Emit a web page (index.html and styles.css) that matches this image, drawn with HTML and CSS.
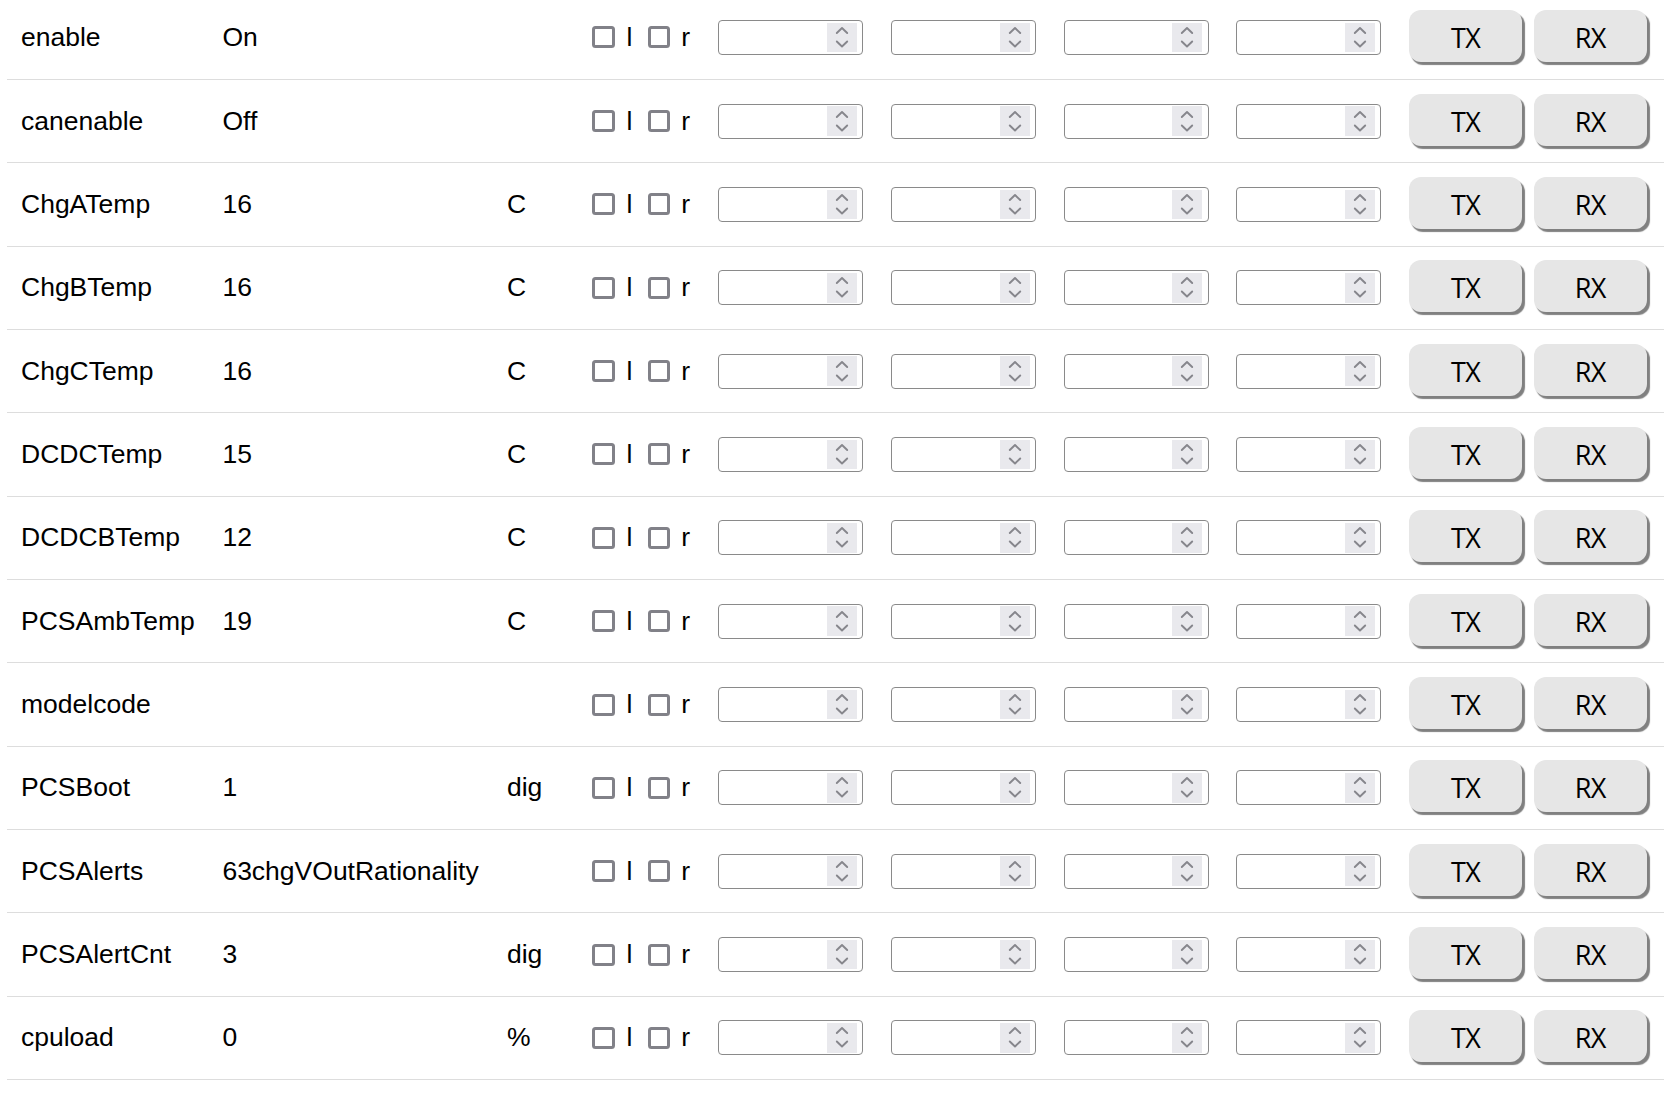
FILE: index.html
```html
<!DOCTYPE html>
<html lang="en">
<head>
<meta charset="utf-8">
<title>Signals</title>
<link rel="stylesheet" href="styles.css">
</head>
<body>
<table class="sig">
  <colgroup>
    <col class="c-name"><col class="c-val"><col class="c-unit"><col class="c-chk">
    <col class="c-num"><col class="c-num"><col class="c-num"><col class="c-num">
    <col class="c-btn">
  </colgroup>
  <tbody id="rows"></tbody>
</table>
<template id="rowtpl">
  <tr>
    <td class="name"></td>
    <td class="val"></td>
    <td class="unit"></td>
    <td class="chk"><div class="chkwrap"><input type="checkbox" class="cb"><span class="lbl">l</span><input type="checkbox" class="cb"><span class="lbl r">r</span></div></td>
    <td><div class="num"><input type="text" class="numin"><span class="spin"><svg width="14" height="23" viewBox="0 0 14 23"><path d="M1.8 7 L7 2 L12.2 7 M1.8 15.5 L7 20.5 L12.2 15.5" fill="none" stroke="#86868c" stroke-width="1.9" stroke-linecap="round" stroke-linejoin="round"/></svg></span></div></td>
    <td><div class="num"><input type="text" class="numin"><span class="spin"><svg width="14" height="23" viewBox="0 0 14 23"><path d="M1.8 7 L7 2 L12.2 7 M1.8 15.5 L7 20.5 L12.2 15.5" fill="none" stroke="#86868c" stroke-width="1.9" stroke-linecap="round" stroke-linejoin="round"/></svg></span></div></td>
    <td><div class="num"><input type="text" class="numin"><span class="spin"><svg width="14" height="23" viewBox="0 0 14 23"><path d="M1.8 7 L7 2 L12.2 7 M1.8 15.5 L7 20.5 L12.2 15.5" fill="none" stroke="#86868c" stroke-width="1.9" stroke-linecap="round" stroke-linejoin="round"/></svg></span></div></td>
    <td><div class="num"><input type="text" class="numin"><span class="spin"><svg width="14" height="23" viewBox="0 0 14 23"><path d="M1.8 7 L7 2 L12.2 7 M1.8 15.5 L7 20.5 L12.2 15.5" fill="none" stroke="#86868c" stroke-width="1.9" stroke-linecap="round" stroke-linejoin="round"/></svg></span></div></td>
    <td class="btns"><div class="btnwrap"><button class="btn">TX</button><button class="btn">RX</button></div></td>
  </tr>
</template>
<script src="app.js"></script>
</body>
</html>
```

FILE: app.js
```js
var data = [
  ["enable", "On", ""],
  ["canenable", "Off", ""],
  ["ChgATemp", "16", "C"],
  ["ChgBTemp", "16", "C"],
  ["ChgCTemp", "16", "C"],
  ["DCDCTemp", "15", "C"],
  ["DCDCBTemp", "12", "C"],
  ["PCSAmbTemp", "19", "C"],
  ["modelcode", "", ""],
  ["PCSBoot", "1", "dig"],
  ["PCSAlerts", "63chgVOutRationality", ""],
  ["PCSAlertCnt", "3", "dig"],
  ["cpuload", "0", "%"]
];
var tpl = document.getElementById("rowtpl");
var body = document.getElementById("rows");
data.forEach(function (d) {
  var tr = tpl.content.firstElementChild.cloneNode(true);
  tr.querySelector(".name").textContent = d[0];
  tr.querySelector(".val").textContent = d[1];
  tr.querySelector(".unit").textContent = d[2];
  body.appendChild(tr);
});
```

FILE: styles.css
```css
html, body {
  margin: 0;
  padding: 0;
  background: #ffffff;
}
body {
  font-family: "Liberation Sans", Arial, sans-serif;
  font-size: 26.5px;
  color: #000000;
}
.sig {
  border-collapse: collapse;
  table-layout: fixed;
  width: 1656.8px;
  margin: -4px 0 0 7px;
}
.c-name { width: 201.4px; }
.c-val { width: 284.6px; }
.c-unit { width: 85.3px; }
.c-chk { width: 126px; }
.c-num { width: 172.7px; }
.c-btn { width: 268.7px; }
.sig tr {
  border-bottom: 1px solid #dddddd;
}
.sig td {
  height: 83.36px;
  padding: 0 14px;
  vertical-align: middle;
  white-space: nowrap;
  box-sizing: border-box;
}
.chkwrap {
  display: flex;
  align-items: center;
}
.cb {
  appearance: none;
  -webkit-appearance: none;
  width: 22.3px;
  height: 22px;
  margin: 0 11.8px 0 0;
  border: 3px solid #818188;
  border-radius: 3.5px;
  background: #ffffff;
  box-sizing: border-box;
  flex: none;
}
.lbl {
  margin-right: 15.3px;
}
.lbl.r {
  margin-right: 0;
  margin-left: -0.5px;
}
.num {
  width: 145px;
  height: 35px;
  box-sizing: border-box;
  border: 1px solid #8a8a8a;
  border-radius: 4px;
  display: flex;
  align-items: center;
  padding-right: 5.3px;
  background: #ffffff;
}
.numin {
  flex: 1;
  min-width: 0;
  border: none;
  outline: none;
  background: transparent;
  font: inherit;
  padding: 0 4px;
  height: 100%;
}
.spin {
  width: 30px;
  height: 29.7px;
  background: #e9e9ed;
  display: flex;
  align-items: center;
  justify-content: center;
  flex: none;
}
.spin svg {
  display: block;
}
.btnwrap {
  display: flex;
  align-items: center;
  gap: 11.7px;
  margin-bottom: 3px;
}
.btn {
  width: 113px;
  height: 52px;
  border: none;
  border-radius: 12px;
  background: #e6e6e6;
  box-shadow: 2.5px 3px 1px #808080;
  font-family: "Open Sans", "Noto Sans", sans-serif;
  font-size: 27px;
  letter-spacing: -0.6px;
  color: #000000;
  padding: 3px 0 0 0;
  flex: none;
}
```
